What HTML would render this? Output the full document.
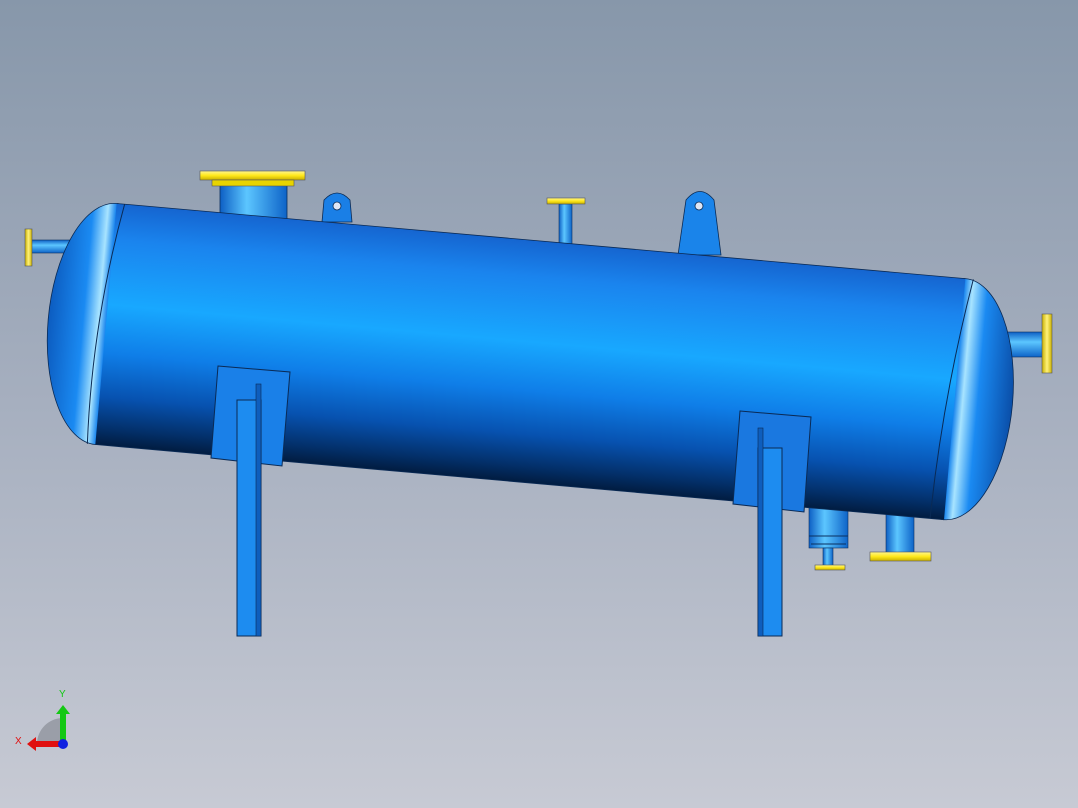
<!DOCTYPE html>
<html><head><style>
html,body{margin:0;padding:0;width:1078px;height:808px;overflow:hidden}
</style></head><body>
<svg width="1078" height="808" viewBox="0 0 1078 808" xmlns="http://www.w3.org/2000/svg">
<defs>
<linearGradient id="bg" x1="0" y1="0" x2="0" y2="1">
<stop offset="0" stop-color="#8797aa"/><stop offset="0.5" stop-color="#a6afbf"/><stop offset="1" stop-color="#c7cad4"/>
</linearGradient>
<linearGradient id="cyl" x1="0" y1="0" x2="0" y2="1">
<stop offset="0" stop-color="#1565d0"/><stop offset="0.15" stop-color="#1a84ee"/><stop offset="0.42" stop-color="#18a8ff"/><stop offset="0.62" stop-color="#0f7ee8"/><stop offset="0.8" stop-color="#0752b0"/><stop offset="0.93" stop-color="#03306a"/><stop offset="1" stop-color="#011c40"/>
</linearGradient>
<linearGradient id="headL" x1="0" y1="0" x2="1" y2="0">
<stop offset="0" stop-color="#0c5cc0"/><stop offset="0.3" stop-color="#1a8af2"/><stop offset="0.43" stop-color="#a8e4ff"/><stop offset="0.5" stop-color="#1a86ee"/><stop offset="1" stop-color="#1a86ee"/>
</linearGradient>
<linearGradient id="headR" x1="0" y1="0" x2="1" y2="0">
<stop offset="0" stop-color="#1a86ee"/><stop offset="0.5" stop-color="#1a86ee"/><stop offset="0.57" stop-color="#a8e4ff"/><stop offset="0.7" stop-color="#1a8af2"/><stop offset="1" stop-color="#0a4ea8"/>
</linearGradient>
<linearGradient id="pipe" x1="0" y1="0" x2="1" y2="0">
<stop offset="0" stop-color="#0d5fc4"/><stop offset="0.4" stop-color="#5cc6ff"/><stop offset="1" stop-color="#0d63c8"/>
</linearGradient>
<linearGradient id="pipeV" x1="0" y1="0" x2="0" y2="1">
<stop offset="0" stop-color="#0d5fc4"/><stop offset="0.4" stop-color="#5cc6ff"/><stop offset="1" stop-color="#0d63c8"/>
</linearGradient>
<linearGradient id="yel" x1="0" y1="0" x2="0" y2="1">
<stop offset="0" stop-color="#fff690"/><stop offset="0.5" stop-color="#ffe81a"/><stop offset="1" stop-color="#c9b000"/>
</linearGradient>
<linearGradient id="yelV" x1="0" y1="0" x2="1" y2="0">
<stop offset="0" stop-color="#c9b000"/><stop offset="0.5" stop-color="#fff27a"/><stop offset="1" stop-color="#c9b000"/>
</linearGradient>
</defs>
<rect width="1078" height="808" fill="url(#bg)"/>

<rect x="220" y="185" width="67" height="38" fill="url(#pipe)" stroke="#0a3060" stroke-width="0.8"/>
<rect x="200" y="171" width="105" height="9" fill="url(#yel)" stroke="#555" stroke-width="0.6"/>
<rect x="212" y="180" width="82" height="6" fill="#e8d400" stroke="#555" stroke-width="0.6"/>
<path d="M322,222 L324,200 Q337,186 350,200 L352,222 Z" fill="#1a7fe6" stroke="#0a2a55" stroke-width="0.8"/>
<circle cx="337" cy="206" r="4" fill="#dfe6f5" stroke="#0a2a55" stroke-width="0.8"/>
<rect x="559" y="204" width="13" height="40" fill="url(#pipe)" stroke="#0a3060" stroke-width="0.6"/>
<rect x="547" y="198" width="38" height="6" fill="url(#yel)" stroke="#555" stroke-width="0.6"/>
<path d="M678,255 L686,200 Q700,183 714,200 L721,255 Z" fill="#1a84ea" stroke="#0a2a55" stroke-width="0.8"/>
<circle cx="699" cy="206" r="4" fill="#dfe6f5" stroke="#0a2a55" stroke-width="0.8"/>
<rect x="30" y="240" width="45" height="13" fill="url(#pipeV)" stroke="#0a3060" stroke-width="0.6"/>
<rect x="25" y="229" width="7" height="37" fill="url(#yelV)" stroke="#555" stroke-width="0.6"/>
<rect x="1000" y="332" width="45" height="25" fill="url(#pipeV)" stroke="#0a3060" stroke-width="0.6"/>
<rect x="1042" y="314" width="10" height="59" fill="url(#yelV)" stroke="#555" stroke-width="0.6"/>
<rect x="809" y="500" width="39" height="48" fill="url(#pipe)" stroke="#0a3060" stroke-width="0.6"/>
<line x1="809" y1="536" x2="848" y2="536" stroke="#0a3060"/>
<line x1="811" y1="544" x2="846" y2="544" stroke="#0a3060"/>
<rect x="823" y="548" width="10" height="18" fill="url(#pipe)" stroke="#0a3060" stroke-width="0.6"/>
<rect x="815" y="565" width="30" height="5" fill="url(#yel)" stroke="#555" stroke-width="0.6"/>
<rect x="886" y="505" width="28" height="48" fill="url(#pipe)" stroke="#0a3060" stroke-width="0.6"/>
<rect x="870" y="552" width="61" height="9" fill="url(#yel)" stroke="#555" stroke-width="0.6"/>

<g transform="translate(106,324) rotate(5.06)">
<ellipse cx="0" cy="0" rx="58" ry="121" fill="url(#headL)" stroke="#0a2a55" stroke-width="0.8"/>
<ellipse cx="852" cy="0" rx="58" ry="121" fill="url(#headR)" stroke="#0a2a55" stroke-width="0.8"/>
<rect x="0" y="-121" width="852" height="242" fill="url(#cyl)"/>
<line x1="0" y1="-121" x2="852" y2="-121" stroke="#0a2a55" stroke-width="0.8"/>
<line x1="0" y1="121" x2="852" y2="121" stroke="#0a2a55" stroke-width="0.8"/>
<path d="M8,-121 Q-14,0 -8,121" fill="none" stroke="#0a2a55" stroke-width="1"/>
<path d="M860,-121 Q840,0 838,121" fill="none" stroke="#0a2a55" stroke-width="1"/>
</g>

<path d="M218,366 L290,372 L282,466 L211,458 Z" fill="#1a80e8" stroke="#0a2a55" stroke-width="1"/>
<rect x="237" y="400" width="24" height="236" fill="#1d8cf0" stroke="#0a2a55" stroke-width="1"/>
<rect x="256" y="384" width="5" height="252" fill="#0e5ebd" stroke="#0a2a55" stroke-width="0.6"/>
<path d="M740,411 L811,417 L804,512 L733,504 Z" fill="#1a78e0" stroke="#0a2a55" stroke-width="1"/>
<rect x="758" y="448" width="24" height="188" fill="#1d8cf0" stroke="#0a2a55" stroke-width="1"/>
<rect x="758" y="428" width="5" height="208" fill="#0e5ebd" stroke="#0a2a55" stroke-width="0.6"/>

<path d="M37,744 A26,26 0 0 1 63,718 L63,744 Z" fill="#9a9ea8"/>
<rect x="60" y="713" width="6" height="30" fill="#14c814"/>
<path d="M56,714 L63,705 L70,714 Z" fill="#14c814"/>
<rect x="35" y="741" width="27" height="6" fill="#e01010"/>
<path d="M36,737 L27,744 L36,751 Z" fill="#e01010"/>
<circle cx="63" cy="744" r="5" fill="#1020e0"/>
<text x="59" y="697" font-family="Liberation Sans,sans-serif" font-size="10" fill="#14c814">Y</text>
<text x="15" y="744" font-family="Liberation Sans,sans-serif" font-size="10" fill="#e01010">X</text>
</svg>
</body></html>
